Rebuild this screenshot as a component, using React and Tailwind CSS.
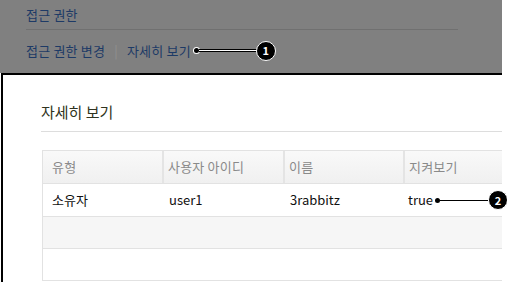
const FONT = { fontFamily: '"Noto Sans CJK KR", "Noto Sans", sans-serif' }

const COLS = [
  { key: 'type', label: '유형', w: 'w-[121px]' },
  { key: 'id', label: '사용자 아이디', w: 'w-[121px]' },
  { key: 'name', label: '이름', w: 'w-[120px]' },
  { key: 'watch', label: '지켜보기', w: 'flex-1' },
]

function Badge({ n }) {
  return (
    <span className="flex h-[20px] w-[20px] shrink-0 items-center justify-center rounded-full border-[1.5px] border-white bg-black text-[11px] font-bold leading-none text-white">
      {n}
    </span>
  )
}

export default function App() {
  return (
    <div className="relative h-[282px] w-[507px] overflow-hidden bg-white" style={FONT}>
      {/* dimmed page behind */}
      <div className="h-[73px] w-[502px] bg-[#808080] pl-[26px]">
        <div className="flex h-[29px] items-center text-[13px] tracking-[0.2px] text-[#1d3a66]">접근 권한</div>
        <div className="h-px w-[432px] bg-[#707070]" />
        <div className="flex h-[41px] items-center text-[13px] tracking-[0.2px] text-[#1d3a66]">
          <span>접근 권한 변경</span>
          <span className="mx-[9px] text-[#909090]">|</span>
          <span>자세히 보기</span>
          <span className="ml-[3px] h-[5px] w-[5px] rounded-full bg-black ring-1 ring-white" />
          <span className="h-[3px] w-[58px] border-y border-black bg-white" />
          <span className="-ml-px"><Badge n="1" /></span>
        </div>
      </div>

      {/* dialog */}
      <div className="ml-px h-[209px] w-[501px] border-l-2 border-t-2 border-black bg-white pl-[38px]">
        <div className="flex h-[56px] items-end pb-[8px] text-[15px] text-[#2f3320]">자세히 보기</div>
        <div className="h-px bg-[#dddddd]" />
        <div className="mt-[18px] ml-px border-l border-t border-[#e2e2e2]">
          <div className="flex h-[33px] border-b border-[#e2e2e2] bg-gradient-to-b from-[#f9f9f9] to-[#f0f0f0] text-[13px] tracking-[0.2px] text-[#8a8a8a]">
            {COLS.map((c, i) => (
              <div key={c.key} className={`${c.w} flex shrink-0 items-center ${i === 0 ? 'pl-[9px]' : 'pl-[4px]'} ${i < 3 ? 'border-r-2 border-[#e4e4e4]' : ''}`}>
                {c.label}
              </div>
            ))}
          </div>
          <div className="flex h-[33px] items-center border-b border-[#e2e2e2] text-[13px] text-[#111]">
            <div className="w-[121px] shrink-0 pl-[9px]">소유자</div>
            <div className="w-[121px] shrink-0 pl-[5px]">user1</div>
            <div className="w-[120px] shrink-0 pl-[5px]">3rabbitz</div>
            <div className="flex shrink-0 items-center pl-[3px]">
              <span>true</span>
              <span className="ml-[2px] h-[5px] w-[5px] rounded-full bg-black" />
              <span className="h-px w-[48px] bg-black" />
              <Badge n="2" />
            </div>
          </div>
          <div className="h-[32px] border-b border-[#e2e2e2] bg-[#f6f6f6]" />
          <div className="h-[32px] border-b border-[#e2e2e2]" />
        </div>
      </div>
    </div>
  )
}
